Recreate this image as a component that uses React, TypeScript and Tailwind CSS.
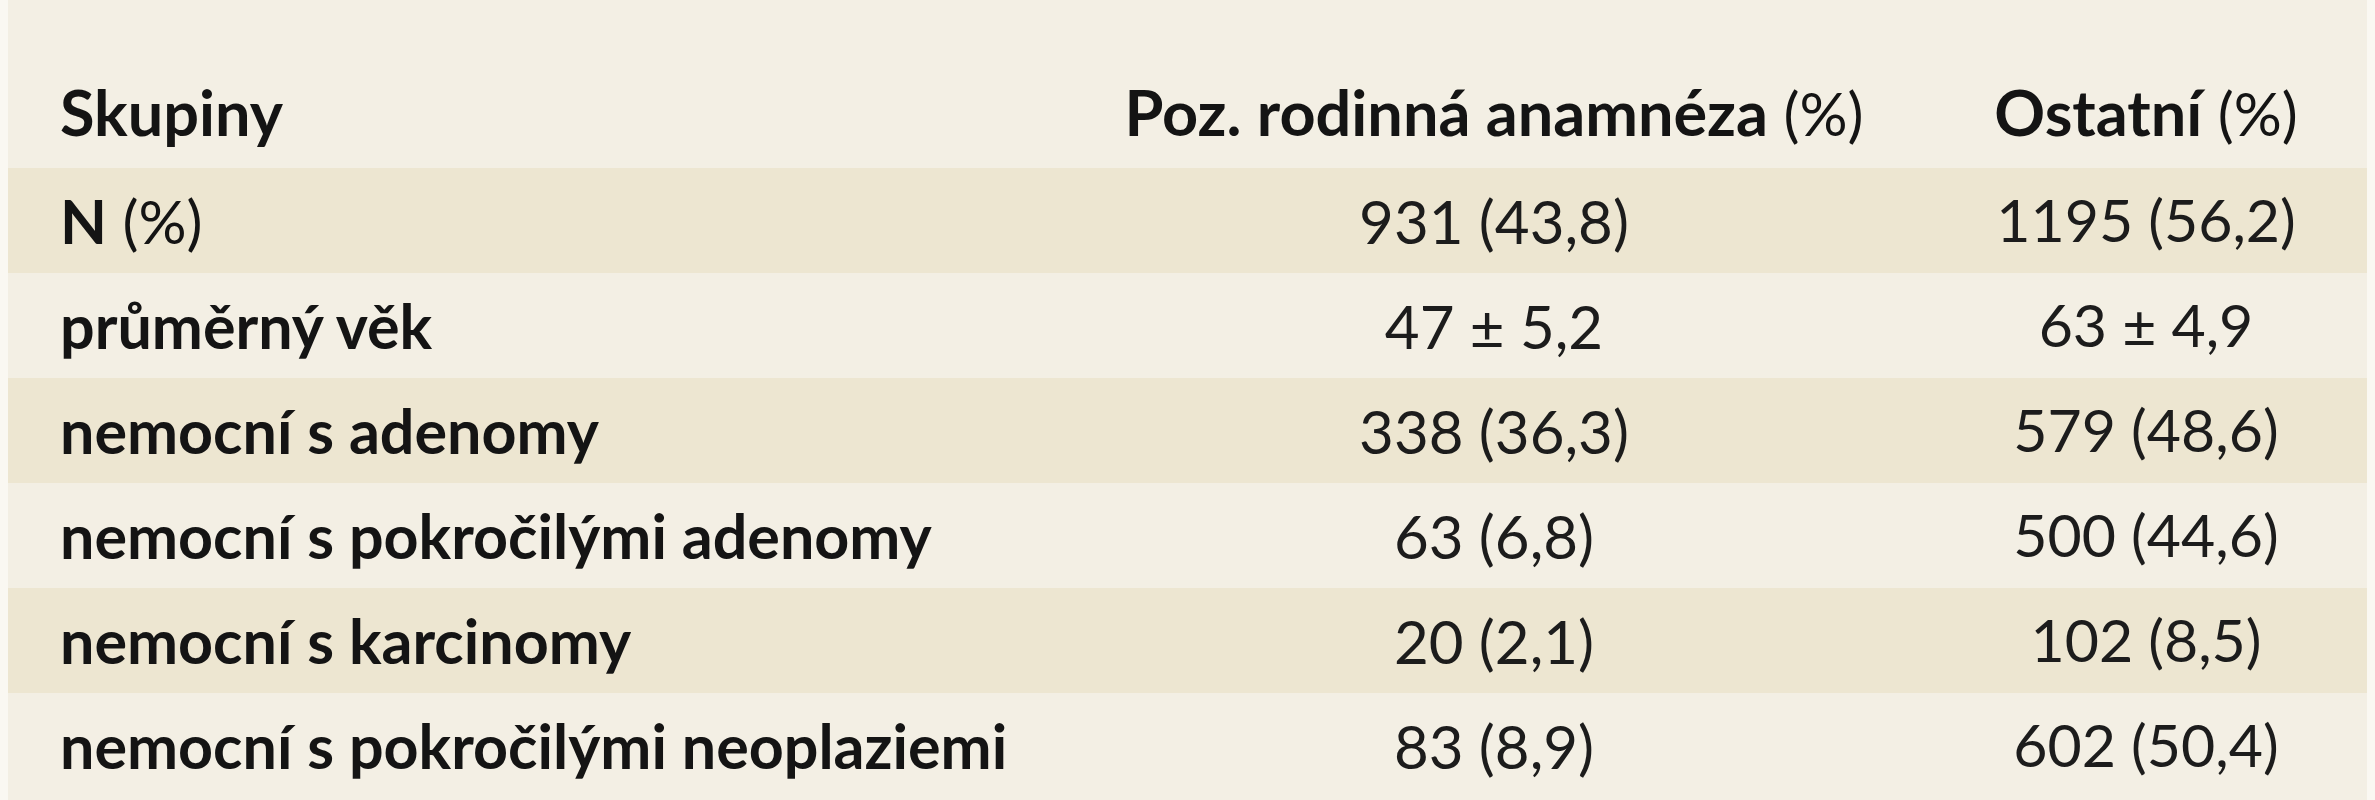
const rows = [
  { label: "N", unit: true, a: "931 (43,8)", b: "1195 (56,2)", shaded: true },
  { label: "průměrný věk", unit: false, a: "47 ± 5,2", b: "63 ± 4,9", shaded: false },
  { label: "nemocní s adenomy", unit: false, a: "338 (36,3)", b: "579 (48,6)", shaded: true },
  { label: "nemocní s pokročilými adenomy", unit: false, a: "63 (6,8)", b: "500 (44,6)", shaded: false },
  { label: "nemocní s karcinomy", unit: false, a: "20 (2,1)", b: "102 (8,5)", shaded: true },
  { label: "nemocní s pokročilými neoplaziemi", unit: false, a: "83 (8,9)", b: "602 (50,4)", shaded: false },
];

export default function App() {
  return (
    <div className="w-[2375px] h-[800px] bg-[#faf8f2] px-[8px] font-['Lato',sans-serif] text-[60px] text-[#141414] overflow-hidden">
      <div className="bg-[#f3efe4] h-full">
        {/* Header */}
        <div className="h-[168px] pl-[52px] grid grid-cols-[1003px_862px_442px] items-end pb-[18px] leading-[1.2]">
          <div className="font-bold text-[63px]">Skupiny</div>
          <div className="text-center">
            <span className="font-bold text-[63px]">Poz. rodinná anamnéza</span> (%)
          </div>
          <div className="text-center">
            <span className="font-bold text-[63px]">Ostatní</span> (%)
          </div>
        </div>

        {/* Rows */}
        {rows.map((row) => (
          <div
            key={row.label}
            className={`h-[105px] pl-[52px] grid grid-cols-[1003px_862px_442px] items-center leading-[1.2] ${
              row.shaded ? "bg-[#ede6d1]" : "bg-[#f3efe4]"
            }`}
          >
            <div>
              <span className="font-bold text-[61px]">{row.label}</span>
              {row.unit && <span> (%)</span>}
            </div>
            <div className="text-center text-[#1c1c1c]">{row.a}</div>
            <div className="text-center text-[#1c1c1c] text-[59px]">{row.b}</div>
          </div>
        ))}
      </div>
    </div>
  );
}
